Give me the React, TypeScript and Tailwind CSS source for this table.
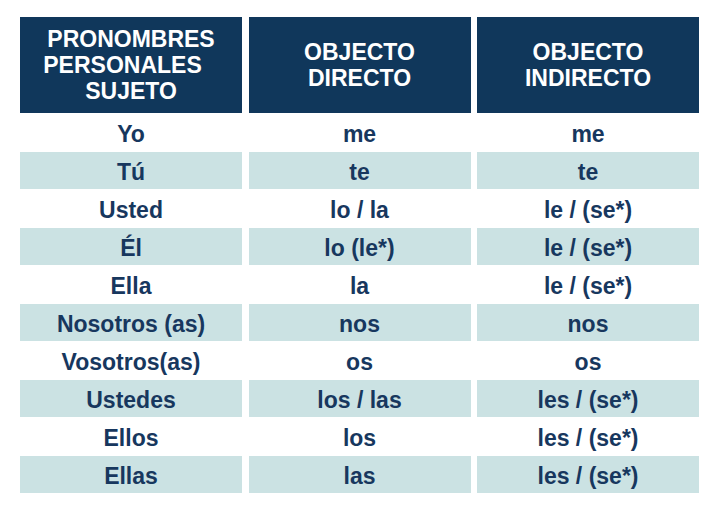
const headers = [
  ["PRONOMBRES", "PERSONALES", "SUJETO"],
  ["OBJECTO", "DIRECTO"],
  ["OBJECTO", "INDIRECTO"],
];

const rows: [string, string, string][] = [
  ["Yo", "me", "me"],
  ["Tú", "te", "te"],
  ["Usted", "lo / la", "le / (se*)"],
  ["Él", "lo (le*)", "le / (se*)"],
  ["Ella", "la", "le / (se*)"],
  ["Nosotros (as)", "nos", "nos"],
  ["Vosotros(as)", "os", "os"],
  ["Ustedes", "los / las", "les / (se*)"],
  ["Ellos", "los", "les / (se*)"],
  ["Ellas", "las", "les / (se*)"],
];

export default function App() {
  return (
    <div
      className="w-[719px] h-[523px] bg-white pl-[20px] pt-[17px]"
      style={{ fontFamily: '"Liberation Sans", Arial, sans-serif' }}
    >
      <div className="grid grid-cols-[222px_222px_222px] gap-x-[6.5px]">
        {headers.map((lines, i) => (
          <div
            key={i}
            className="h-[96px] bg-[#10375b] flex flex-col items-center justify-center text-white font-bold text-[23px] leading-[26px] text-center"
          >
            {lines.map((l) => (
              <span key={l} className={l === "PERSONALES" ? "pr-[17px]" : ""}>
                {l}
              </span>
            ))}
          </div>
        ))}
        {rows.map((r, ri) =>
          r.map((cell, ci) => (
            <div key={`${ri}-${ci}`} className="h-[38px] pt-[1px] bg-white">
              <div
                className={`h-full pt-[3px] flex items-center justify-center text-[23px] font-bold text-[#17375e] ${
                  ri % 2 === 1 ? "bg-[#cbe2e3]" : "bg-white"
                }`}
              >
                {cell}
              </div>
            </div>
          ))
        )}
      </div>
    </div>
  );
}
